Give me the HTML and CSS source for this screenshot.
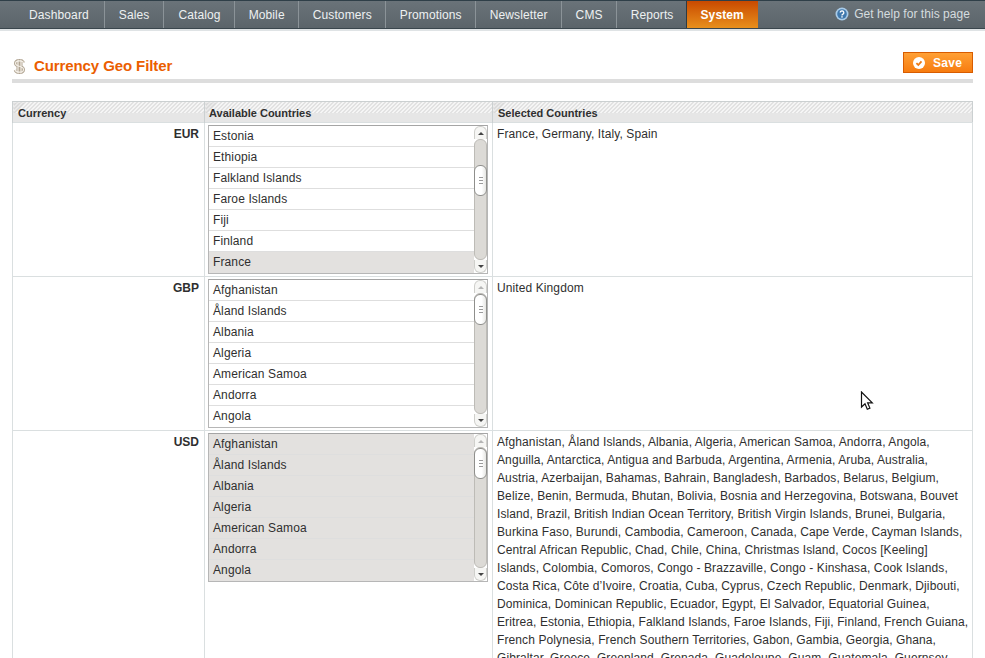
FILE: index.html
```html
<!DOCTYPE html>
<html lang="en">
<head>
  <meta charset="UTF-8" />
  <meta name="viewport" content="width=device-width, initial-scale=1.0" />
  <title>Currency Geo Filter</title>
  <link rel="stylesheet" href="styles.css">
</head>
<body>
  <div class="nav">
    <ul class="nav-menu">
      <li>Dashboard</li>
      <li>Sales</li>
      <li>Catalog</li>
      <li>Mobile</li>
      <li>Customers</li>
      <li>Promotions</li>
      <li>Newsletter</li>
      <li>CMS</li>
      <li>Reports</li>
      <li class="active">System</li>
    </ul>
    <a class="help">
      <svg width="14" height="14" viewBox="0 0 14 14"><circle cx="7" cy="7" r="6.5" fill="#a9cbe8"/><circle cx="7" cy="7" r="4.8" fill="#3f78ad"/><path d="M5.2 5.6a1.8 1.8 0 1 1 2.7 1.6c-.6.3-.9.6-.9 1.2" fill="none" stroke="#fff" stroke-width="1.3"/><rect x="6.3" y="9.2" width="1.4" height="1.4" fill="#fff"/></svg>
      Get help for this page
    </a>
  </div>

  <div class="content">
    <div class="page-head">
      <h3>
        <svg width="13" height="17" viewBox="0 0 13 17"><path d="M5 1v15M8 1v15M10.500 4.800C10 3.400 8.500 2.800 6.500 2.800 4 2.800 2.500 3.800 2.500 5.400c0 3.600 8 2 8 6 0 1.700-1.700 2.800-4 2.800-2.200 0-3.800-.7-4.300-2.200" fill="none" stroke="#b0a492" stroke-width="3"/><path d="M5 1.500v14M8 1.500v14M10.500 4.800C10 3.400 8.500 2.800 6.500 2.800 4 2.800 2.500 3.800 2.500 5.400c0 3.600 8 2 8 6 0 1.700-1.700 2.800-4 2.800-2.200 0-3.800-.7-4.300-2.200" fill="none" stroke="#f3eee6" stroke-width="1.200"/></svg>
        Currency Geo Filter
      </h3>
      <button class="save">
        <svg width="12" height="12" viewBox="0 0 12 12"><circle cx="6" cy="6" r="6" fill="#fff"/><path d="M3.400 6.200l1.900 1.800 3.200-3.700" fill="none" stroke="#ee7a14" stroke-width="1.800"/></svg>
        Save
      </button>
    </div>

    <table class="grid">
      <colgroup>
        <col class="col-currency">
        <col class="col-available">
        <col>
      </colgroup>
      <thead>
        <tr>
          <th>Currency</th>
          <th>Available Countries</th>
          <th>Selected Countries</th>
        </tr>
      </thead>
      <tbody>
        <tr>
          <td class="code">EUR</td>
          <td class="picker">
            <div class="listbox">
              <ul class="options">
                <li>Estonia</li>
                <li>Ethiopia</li>
                <li>Falkland Islands</li>
                <li>Faroe Islands</li>
                <li>Fiji</li>
                <li>Finland</li>
                <li class="sel">France</li>
              </ul>
              <div class="scrollbar">
                <div class="sb-btn up"></div>
                <div class="sb-track thumb-mid"><div class="sb-thumb"><i></i></div></div>
                <div class="sb-btn down"></div>
              </div>
            </div>
          </td>
          <td class="selected">France, Germany, Italy, Spain</td>
        </tr>
        <tr>
          <td class="code">GBP</td>
          <td class="picker">
            <div class="listbox">
              <ul class="options">
                <li>Afghanistan</li>
                <li>Åland Islands</li>
                <li>Albania</li>
                <li>Algeria</li>
                <li>American Samoa</li>
                <li>Andorra</li>
                <li>Angola</li>
              </ul>
              <div class="scrollbar">
                <div class="sb-btn up off"></div>
                <div class="sb-track"><div class="sb-thumb"><i></i></div></div>
                <div class="sb-btn down"></div>
              </div>
            </div>
          </td>
          <td class="selected">United Kingdom</td>
        </tr>
        <tr>
          <td class="code">USD</td>
          <td class="picker">
            <div class="listbox">
              <ul class="options all-sel">
                <li>Afghanistan</li>
                <li>Åland Islands</li>
                <li>Albania</li>
                <li>Algeria</li>
                <li>American Samoa</li>
                <li>Andorra</li>
                <li>Angola</li>
              </ul>
              <div class="scrollbar">
                <div class="sb-btn up off"></div>
                <div class="sb-track"><div class="sb-thumb"><i></i></div></div>
                <div class="sb-btn down"></div>
              </div>
            </div>
          </td>
          <td class="selected">Afghanistan, Åland Islands, Albania, Algeria, American Samoa, Andorra, Angola, Anguilla, Antarctica, Antigua and Barbuda, Argentina, Armenia, Aruba, Australia, Austria, Azerbaijan, Bahamas, Bahrain, Bangladesh, Barbados, Belarus, Belgium, Belize, Benin, Bermuda, Bhutan, Bolivia, Bosnia and Herzegovina, Botswana, Bouvet Island, Brazil, British Indian Ocean Territory, British Virgin Islands, Brunei, Bulgaria, Burkina Faso, Burundi, Cambodia, Cameroon, Canada, Cape Verde, Cayman Islands, Central African Republic, Chad, Chile, China, Christmas Island, Cocos [Keeling] Islands, Colombia, Comoros, Congo - Brazzaville, Congo - Kinshasa, Cook Islands, Costa Rica, Côte d’Ivoire, Croatia, Cuba, Cyprus, Czech Republic, Denmark, Djibouti, Dominica, Dominican Republic, Ecuador, Egypt, El Salvador, Equatorial Guinea, Eritrea, Estonia, Ethiopia, Falkland Islands, Faroe Islands, Fiji, Finland, French Guiana, French Polynesia, French Southern Territories, Gabon, Gambia, Georgia, Ghana, Gibraltar, Greece, Greenland, Grenada, Guadeloupe, Guam, Guatemala, Guernsey,</td>
        </tr>
      </tbody>
    </table>
  </div>

  <!-- mouse pointer caught in the screenshot -->
  <svg class="pointer" width="14" height="21" viewBox="0 0 14 21"><path d="M1.500 1v15l3.500-3.300 2.300 5.500 2.600-1.100-2.300-5.300h4.700z" fill="#fff" stroke="#111" stroke-width="1.200"/></svg>
</body>
</html>
```

FILE: styles.css
```css
html, body {
  height: 658px;
  overflow: hidden;
}
body {
  margin: 0;
  background-color: #fff;
  color: #2f2f2f;
  font-family: "Liberation Sans", Arial, sans-serif;
  font-size: 12px;
  letter-spacing: 0.12px;
}
ul {
  list-style: none;
  margin: 0;
  padding: 0;
}

/* top nav */
.nav {
  display: flex;
  justify-content: space-between;
  height: 27px;
  border-top: 1px solid #2f3f48;
  border-bottom: 1px solid #3a464d;
  box-shadow: 0 2px 0 #dfe3e5;
  background: linear-gradient(#6a7379, #5b646a);
}
.nav-menu {
  display: flex;
  padding-left: 15px;
}
.nav-menu li {
  padding: 0 13px 0 14px;
  line-height: 28px;
  color: #eef1f2;
  border-right: 1px solid #8b9398;
}
.nav-menu li:first-child {
  padding-right: 15px;
}
.nav-menu li:nth-child(2) {
  padding-right: 14px;
}
.nav-menu li:nth-last-child(2) {
  border-right-color: #2d3a42;
}
.nav-menu li.active {
  padding: 0 14px 0 13px;
  border-right: 0;
  font-weight: bold;
  color: #fff;
  background: linear-gradient(#c94a00, #e88f1c);
}
.help {
  display: flex;
  align-items: center;
  gap: 5px;
  height: 25px;
  padding-right: 15px;
  letter-spacing: 0.05px;
  color: #d5dcdf;
}

/* page title */
.content {
  padding: 0 12px;
}
.page-head {
  box-sizing: border-box;
  display: flex;
  justify-content: space-between;
  align-items: flex-start;
  height: 54px;
  padding-top: 23px;
  border-bottom: 4px solid #ddd;
  margin-bottom: 18px;
}
.page-head h3 {
  display: flex;
  align-items: center;
  gap: 8px;
  margin: 5px 0 0 1px;
  font-size: 15px;
  line-height: 18px;
  letter-spacing: -0.1px;
  color: #eb5e00;
}
.save {
  display: flex;
  align-items: center;
  gap: 8px;
  width: 70px;
  height: 21px;
  padding: 0 0 0 9px;
  border: 1px solid #d85c00;
  background: linear-gradient(#ffa035, #f77c10);
  color: #fff;
  font-family: inherit;
  font-size: 12px;
  font-weight: bold;
  letter-spacing: 0.3px;
}

/* grid */
.grid {
  width: 961px;
  table-layout: fixed;
  border-collapse: collapse;
  border: 1px solid #cbd0d1;
}
.col-currency { width: 192px; }
.col-available { width: 288px; }
.grid th {
  height: 18px;
  padding: 2px 0 0 5px;
  border-left: 1px solid #cbd0d1;
  text-align: left;
  font-size: 11px;
  line-height: 18px;
  letter-spacing: 0;
  background:
    linear-gradient(#e6e6e6, #e6e6e6) 0 11px / 100% 100% no-repeat,
    repeating-linear-gradient(135deg, #fff 0 1.41px, #d8d8d8 1.41px 2.83px);
}
.grid th:nth-child(2) {
  padding-left: 4px;
}
.grid td {
  padding: 0;
  vertical-align: top;
  border: 1px solid #dadfe0;
}
.grid .code {
  padding: 4px 5px 0 0;
  text-align: right;
  font-weight: bold;
  line-height: 15px;
  letter-spacing: 0;
}
.grid .picker {
  padding: 2px 4px 2px 3px;
}
.grid .selected {
  padding: 2px 0 0 4px;
  line-height: 18px;
  letter-spacing: 0.1px;
}

/* multi select */
.listbox {
  display: flex;
  height: 147px;
  border: 1px solid #b6b6b6;
  border-top-color: #a5a5a5;
}
.options {
  flex: 1;
}
.options li {
  height: 20px;
  padding-left: 4px;
  line-height: 20px;
  border-bottom: 1px solid #dedede;
}
.options li:last-child {
  border-bottom: 0;
  height: 21px;
}
.options .sel,
.all-sel {
  background-color: #e3e1df;
}
.scrollbar {
  display: flex;
  flex-direction: column;
  width: 13px;
  background-color: #fff;
}
.sb-btn {
  display: flex;
  align-items: center;
  justify-content: center;
  height: 12px;
  border: 1px solid #cfcfcb;
  background: #f6f6f4;
}
.sb-btn.up {
  border-radius: 6px 6px 0 0;
  border-bottom: 0;
}
.sb-btn.down {
  border-radius: 0 0 6px 6px;
  border-top: 0;
}
.sb-btn::after {
  content: "";
  border-left: 3px solid transparent;
  border-right: 3px solid transparent;
}
.sb-btn.up::after { border-bottom: 3px solid #444; }
.sb-btn.down::after { border-top: 3px solid #444; }
.sb-btn.off::after { border-bottom-color: #b5b5b5; }
.sb-track {
  flex: 1;
  border: 1px solid #bdbbb6;
  border-radius: 6px;
  background-color: #dcdad6;
}
.sb-thumb {
  display: flex;
  align-items: center;
  justify-content: center;
  height: 29px;
  margin: 0 -1px;
  border: 1px solid #8f8f8c;
  border-radius: 6px;
  background: linear-gradient(90deg, #fff 60%, #e6e6e3);
}
.thumb-mid .sb-thumb {
  margin-top: 25px;
}
.sb-thumb i {
  width: 4px;
  height: 7px;
  background: repeating-linear-gradient(#9a9a9a 0 1px, transparent 1px 3px);
}

.pointer {
  position: absolute;
  left: 860px;
  top: 391px;
}
```
